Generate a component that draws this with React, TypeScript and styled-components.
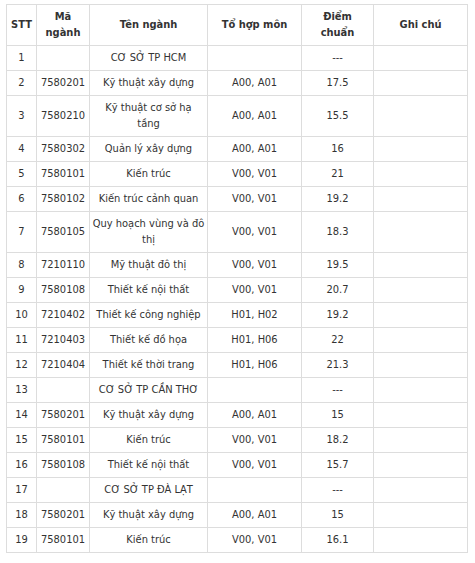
import React from "react";
import styled, { createGlobalStyle } from "styled-components";

const GlobalStyle = createGlobalStyle`
  html, body { margin: 0; padding: 0; background: #ffffff; }
  body { font-family: "DejaVu Sans", Tahoma, sans-serif; font-stretch: condensed; }
`;

const Page = styled.div`
  padding: 4px 0 0 6px;
`;

const Table = styled.table`
  border-collapse: collapse;
  table-layout: fixed;
  width: 461px;
  font-family: "DejaVu Sans", Tahoma, sans-serif;
  font-stretch: condensed;
  font-size: 11px;
  line-height: 16px;
  color: #333333;
`;

const HeadCell = styled.th`
  border: 1px solid #dddddd;
  padding: 4px 2px;
  text-align: center;
  vertical-align: middle;
  font-weight: bold;
  white-space: pre;
`;

const Cell = styled.td`
  border: 1px solid #dddddd;
  padding: 4px 2px;
  text-align: center;
  vertical-align: middle;
  font-weight: normal;
  white-space: pre;
`;

type Row = [string, string, string, string, string];

const rows: Row[] = [
  ["1", "", "CƠ SỞ TP HCM", "", "---"],
  ["2", "7580201", "Kỹ thuật xây dựng", "A00, A01", "17.5"],
  ["3", "7580210", "Kỹ thuật cơ sở hạ\ntầng", "A00, A01", "15.5"],
  ["4", "7580302", "Quản lý xây dựng", "A00, A01", "16"],
  ["5", "7580101", "Kiến trúc", "V00, V01", "21"],
  ["6", "7580102", "Kiến trúc cảnh quan", "V00, V01", "19.2"],
  ["7", "7580105", "Quy hoạch vùng và đô\nthị", "V00, V01", "18.3"],
  ["8", "7210110", "Mỹ thuật đô thị", "V00, V01", "19.5"],
  ["9", "7580108", "Thiết kế nội thất", "V00, V01", "20.7"],
  ["10", "7210402", "Thiết kế công nghiệp", "H01, H02", "19.2"],
  ["11", "7210403", "Thiết kế đồ họa", "H01, H06", "22"],
  ["12", "7210404", "Thiết kế thời trang", "H01, H06", "21.3"],
  ["13", "", "CƠ SỞ TP CẦN THƠ", "", "---"],
  ["14", "7580201", "Kỹ thuật xây dựng", "A00, A01", "15"],
  ["15", "7580101", "Kiến trúc", "V00, V01", "18.2"],
  ["16", "7580108", "Thiết kế nội thất", "V00, V01", "15.7"],
  ["17", "", "CƠ SỞ TP ĐÀ LẠT", "", "---"],
  ["18", "7580201", "Kỹ thuật xây dựng", "A00, A01", "15"],
  ["19", "7580101", "Kiến trúc", "V00, V01", "16.1"],
];

const headers = ["STT", "Mã\nngành", "Tên ngành", "Tổ hợp môn", "Điểm\nchuẩn", "Ghi chú"];

const widths = [30, 53, 118, 94, 72, 94];

export default function App() {
  return (
    <>
      <GlobalStyle />
      <Page>
        <Table>
          <colgroup>
            {widths.map((w, i) => (
              <col key={i} style={{ width: w }} />
            ))}
          </colgroup>
          <thead>
            <tr>
              {headers.map((h) => (
                <HeadCell key={h}>{h}</HeadCell>
              ))}
            </tr>
          </thead>
          <tbody>
            {rows.map((r) => (
              <tr key={r[0]}>
                {r.map((c, i) => (
                  <Cell key={i}>{c}</Cell>
                ))}
                <Cell />
              </tr>
            ))}
          </tbody>
        </Table>
      </Page>
    </>
  );
}
